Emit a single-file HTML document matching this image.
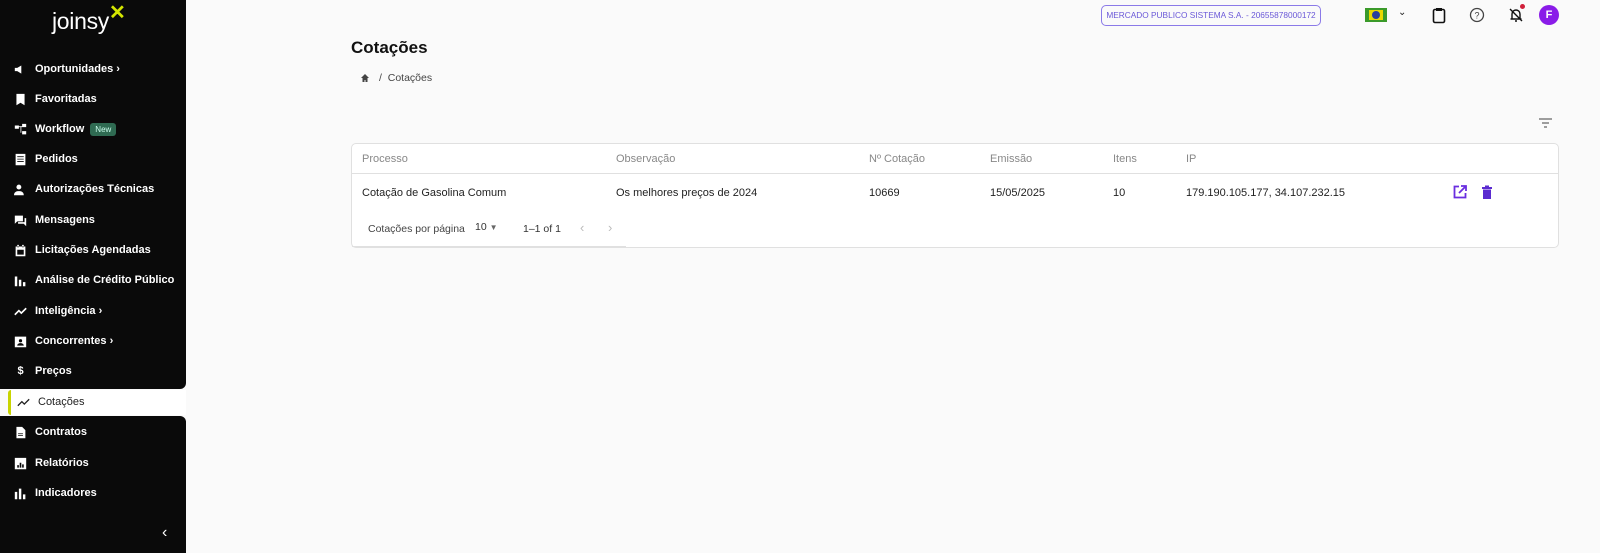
<!DOCTYPE html>
<html><head><meta charset="utf-8"><style>
*{box-sizing:border-box;margin:0;padding:0}
body{width:1600px;height:553px;background:#fafafa;font-family:"Liberation Sans",sans-serif;position:relative;overflow:hidden;color:#222}
.sb1{position:absolute;left:0;top:0;width:186px;height:389px;background:#0a0a0a;border-bottom-right-radius:6px}
.sb2{position:absolute;left:0;top:416px;width:186px;height:137px;background:#0a0a0a;border-top-right-radius:6px}
.active{position:absolute;left:8px;top:390px;width:178px;height:25px;background:#fff;border-left:3px solid #c8d400;border-radius:3px 0 0 3px}
.it{position:absolute;left:14px;color:#fff;font-size:11px;font-weight:bold;display:flex;align-items:center;height:16px;white-space:nowrap}
.it svg{width:13px;height:13px;margin-right:8px;fill:#fff}
.logo{position:absolute;left:52px;top:8px;color:#fff;font-size:23px;letter-spacing:-0.3px}
.new{background:#2f6b52;color:#cfe;font-size:8px;font-weight:normal;padding:2px 5px;border-radius:3px;margin-left:6px}
.tag{position:absolute;left:1101px;top:5px;width:220px;height:21px;border:1px solid #8b7ae8;border-radius:5px;color:#6a58d8;font-size:8.3px;line-height:19px;text-align:center;white-space:nowrap;overflow:hidden}
.card{position:absolute;left:351px;top:143px;width:1208px;height:105px;background:#fff;border:1px solid #e0e0e0;border-radius:5px}
.t{position:absolute;font-size:11px;white-space:nowrap}
.h{color:#888;top:9px}
.r{top:43px;color:#222}
</style></head><body>
<div class="sb1"></div><div class="sb2"></div>
<div class="logo">joinsy<span style="color:#d4e600;font-size:20px;position:relative;top:-10px;font-weight:bold">✕</span></div>
<div class="it" style="top:61px"><svg viewBox="0 0 16 16"><path d="M1 6h3l5-3v10L4 10H1z"/></svg>Oportunidades&nbsp;›</div>
<div class="it" style="top:91px"><svg viewBox="0 0 16 16"><path d="M3 1h10v14l-5-3-5 3z"/></svg>Favoritadas</div>
<div class="it" style="top:121px"><svg viewBox="0 0 16 16"><path d="M1 3h5v4H1zM10 1h5v4h-5zM10 10h5v4h-5zM6 4h4v1H6zM8 5h1v7H8z"/></svg>Workflow<span class="new">New</span></div>
<div class="it" style="top:151px"><svg viewBox="0 0 16 16"><path d="M2 1h12v14H2zM4 4v1h8V4zm0 3v1h8V7zm0 3v1h8v-1z" fill-rule="evenodd"/></svg>Pedidos</div>
<div class="it" style="top:181px"><svg viewBox="0 0 16 16"><circle cx="6" cy="5" r="3"/><path d="M0 15c0-4 3-5 6-5s6 1 6 5z"/></svg>Autorizações Técnicas</div>
<div class="it" style="top:212px"><svg viewBox="0 0 16 16"><path d="M1 2h10v7H4l-3 3zM13 5h2v10l-3-3H5v-2h8z"/></svg>Mensagens</div>
<div class="it" style="top:242px"><svg viewBox="0 0 16 16"><path d="M2 3h12v12H2zM4 1h2v3H4zM10 1h2v3h-2zM4 7v6h8V7z" fill-rule="evenodd"/></svg>Licitações Agendadas</div>
<div class="it" style="top:272px"><svg viewBox="0 0 16 16"><path d="M1 3h3v12H1zM6 7h3v8H6zM11 10h3v5h-3z"/></svg>Análise de Crédito Público</div>
<div class="it" style="top:303px"><svg viewBox="0 0 16 16"><path d="M1 12l5-5 3 3 6-6" stroke="#fff" stroke-width="2" fill="none"/></svg>Inteligência&nbsp;›</div>
<div class="it" style="top:333px"><svg viewBox="0 0 16 16"><path d="M1 2h14v13H1zM8 5a2 2 0 100 4 2 2 0 000-4zM4 13h8c0-2-2-3-4-3s-4 1-4 3z" fill-rule="evenodd"/></svg>Concorrentes&nbsp;›</div>
<div class="it" style="top:363px"><span style="width:13px;margin-right:8px;text-align:center">$</span>Preços</div>
<div class="active"></div>
<div class="it" style="top:394px;left:17px;color:#222;font-weight:normal"><svg viewBox="0 0 16 16" style="fill:none"><path d="M1 12l5-5 3 3 6-6" stroke="#222" stroke-width="1.6"/></svg>Cotações</div>
<div class="it" style="top:424px"><svg viewBox="0 0 16 16"><path d="M3 1h7l4 4v10H3zM5 9h6v1H5zm0 2h6v1H5z" fill-rule="evenodd"/></svg>Contratos</div>
<div class="it" style="top:455px"><svg viewBox="0 0 16 16"><path d="M1 1h14v14H1zM4 10h2v3H4zm3-3h2v6H7zm3 2h2v4h-2z" fill-rule="evenodd"/></svg>Relatórios</div>
<div class="it" style="top:485px"><svg viewBox="0 0 16 16"><path d="M1 6h3v9H1zM6 2h3v13H6zM11 9h3v6h-3z"/></svg>Indicadores</div>
<div style="position:absolute;left:162px;top:524px;color:#fff;font-size:16px">‹</div>

<div class="tag">MERCADO PUBLICO SISTEMA S.A. - 20655878000172</div>
<div style="position:absolute;left:1365px;top:8px;width:22px;height:14px;background:#3a9a2a"><div style="position:absolute;left:4px;top:2px;width:14px;height:10px;background:#e8d800"></div><div style="position:absolute;left:7px;top:3px;width:8px;height:8px;border-radius:50%;background:#2a3f9a"></div></div>
<div style="position:absolute;left:1398px;top:7px;font-size:10px">⌄</div>
<svg style="position:absolute;left:1432px;top:7px" width="14" height="17" viewBox="0 0 14 17"><rect x="1.5" y="2.5" width="11" height="13" rx="1.5" fill="none" stroke="#111" stroke-width="1.6"/><rect x="4" y="1" width="6" height="3" fill="#111"/></svg>
<svg style="position:absolute;left:1469px;top:7px" width="16" height="16"><circle cx="8" cy="8" r="6.5" fill="none" stroke="#444" stroke-width="1.3"/><text x="8" y="11.5" font-size="9" text-anchor="middle" fill="#444" font-family="Liberation Sans">?</text></svg>
<svg style="position:absolute;left:1508px;top:7px" width="16" height="16"><path d="M4 12V7a4 4 0 018 0v5h1.5M2.5 12h9M7 14h2M2 2l12 12" stroke="#111" stroke-width="1.4" fill="none"/></svg>
<div style="position:absolute;left:1520px;top:4px;width:5px;height:5px;border-radius:50%;background:#d0203a"></div>
<div style="position:absolute;left:1539px;top:5px;width:20px;height:20px;border-radius:50%;background:#8a1ce8;color:#fff;font-size:11px;font-weight:bold;text-align:center;line-height:20px">F</div>

<div style="position:absolute;left:351px;top:38px;font-size:17px;font-weight:bold;color:#111">Cotações</div>
<svg style="position:absolute;left:360px;top:73px" width="10" height="10"><path d="M5 1L1 5h1.5v4h2V7h1v2h2V5H9z" fill="#444"/></svg>
<div style="position:absolute;left:379px;top:72px;font-size:10.5px;color:#444">/ &nbsp;Cotações</div>
<svg style="position:absolute;left:1539px;top:118px" width="13" height="10"><path d="M0 1h13M3 5h7M5 9h3" stroke="#666" stroke-width="1.3"/></svg>

<div class="card">
<div style="position:absolute;left:0;right:0;top:29px;border-top:1px solid #e0e0e0"></div>
<div class="t h" style="left:10px">Processo</div>
<div class="t h" style="left:264px">Observação</div>
<div class="t h" style="left:517px">Nº Cotação</div>
<div class="t h" style="left:638px">Emissão</div>
<div class="t h" style="left:761px">Itens</div>
<div class="t h" style="left:834px">IP</div>
<div class="t r" style="left:10px">Cotação de Gasolina Comum</div>
<div class="t r" style="left:264px">Os melhores preços de 2024</div>
<div class="t r" style="left:517px">10669</div>
<div class="t r" style="left:638px">15/05/2025</div>
<div class="t r" style="left:761px">10</div>
<div class="t r" style="left:834px">179.190.105.177, 34.107.232.15</div>
<svg style="position:absolute;left:1101px;top:41px" width="14" height="14"><path d="M6 1.5H1.5v11h11V8M8 1h5v5M13 1L6 8" stroke="#6a2ee0" stroke-width="1.8" fill="none"/></svg>
<svg style="position:absolute;left:1129px;top:41px" width="12" height="14"><path d="M1 2h10v2H1zM4 0.5h4v2H4zM2 4.5h8V14H2z" fill="#5b2bd0"/></svg>
<div class="t" style="left:16px;top:79px;color:#444;font-size:10.5px">Cotações por página</div>
<div class="t" style="left:123px;top:77px;color:#333;font-size:10.5px">10 <span style="font-size:8px;color:#666">▼</span></div>
<div class="t" style="left:171px;top:79px;color:#333;font-size:10.5px">1–1 of 1</div>
<div class="t" style="left:228px;top:76px;color:#bbb;font-size:13px">‹</div>
<div class="t" style="left:256px;top:76px;color:#bbb;font-size:13px">›</div>
<div style="position:absolute;left:0;width:274px;top:102px;border-top:1px solid #e0e0e0"></div>
</div>
</body></html>
